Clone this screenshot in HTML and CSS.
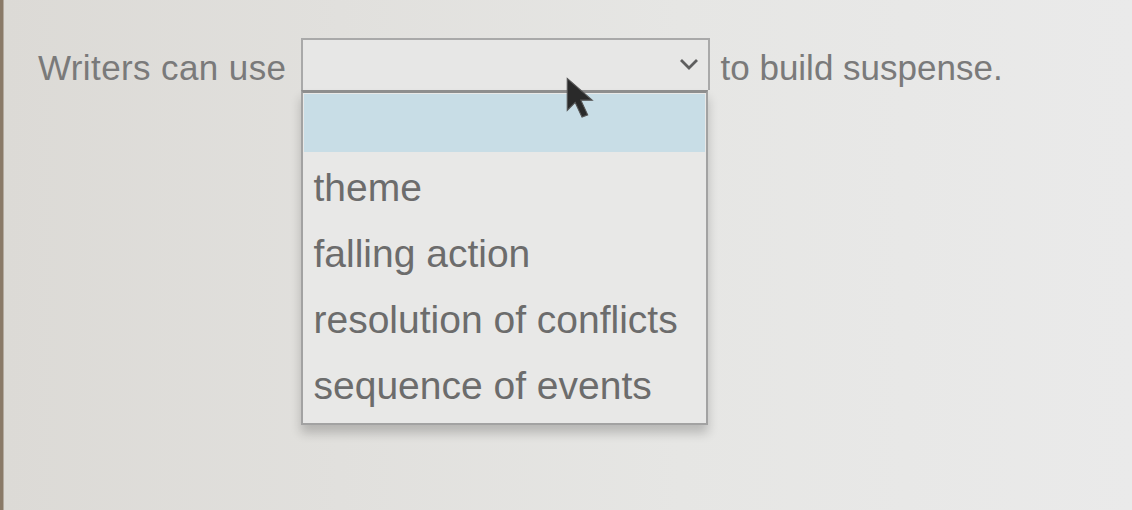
FILE: index.html
```html
<html>
<head>
<meta charset="UTF-8">
<meta name="viewport" content="width=device-width, initial-scale=1.0">
<title>Fill in the blank</title>
<link rel="stylesheet" href="styles.css">
</head>
<body>
	<div class="page">
		<div class="question">
			<span class="words before">Writers can use</span>
			<div class="dropdown">
				<div class="box">
					<svg class="chevron" width="20" height="14" viewBox="0 0 20 14"><polyline points="2,3 10,11 18,3" fill="none" stroke="#5e5e5e" stroke-width="2.8"/></svg>
				</div>
				<ul class="list">
					<li class="opt picked"></li>
					<li class="opt">theme</li>
					<li class="opt">falling action</li>
					<li class="opt">resolution of conflicts</li>
					<li class="opt">sequence of events</li>
				</ul>
				<!-- mouse pointer -->
				<svg class="pointer" width="34" height="46" viewBox="0 0 30 40"><path d="M2 2 L2 30 L9 23 L15 36 L20 34 L14 21 L24 21 Z" fill="#2a2a2a" stroke="#555" stroke-width="1"/></svg>
			</div>
			<span class="words after">to build suspense.</span>
		</div>
	</div>
</body>
</html>
```

FILE: styles.css
```css
/* page */
html, body {margin:0;padding:0;height:100%;}
body {
	font-family:"Liberation Sans", Arial, sans-serif;
	color:#777;
	background:linear-gradient(90deg, #8a7a68 0, #8a7a68 3px, #dcdad6 4px, #e1e0dd 30%, #e6e6e4 60%, #eaeaea 100%);
	overflow:hidden;
}
ul, li {list-style:none;margin:0;padding:0;}
.page {padding:38px 0 0 38px;}

/* sentence with the blank */
.question {display:flex;align-items:center;}
.words {font-size:35px;color:#7a7a7a;margin-top:8px;}
.before {letter-spacing:0.4px;}
.after {margin-left:11px;}

.dropdown {position:relative;margin-left:14px;}
.box {
	width:405px;height:50px;
	border:2px solid #a9a9a9;border-bottom:none;
	background:#e7e7e6;
	display:flex;align-items:center;justify-content:flex-end;
}
.chevron {margin-right:9px;margin-top:-2px;}

/* open option list */
.list {
	position:absolute;left:0;top:52px;
	width:403px;
	border:2px solid #a2a2a2;border-top:3px solid #8e8e8e;
	background:#e8e8e7;
	padding:1px 0 4px 0;
	box-shadow:0 8px 10px rgba(0,0,0,0.2);
}
.opt {height:66px;line-height:66px;padding-left:11px;font-size:39px;color:#6c6c6c;white-space:nowrap;}
.picked {height:58px;background:#c8dde6;margin:0 1px 3px 1px;}

.pointer {position:absolute;left:264px;top:38px;}
```
